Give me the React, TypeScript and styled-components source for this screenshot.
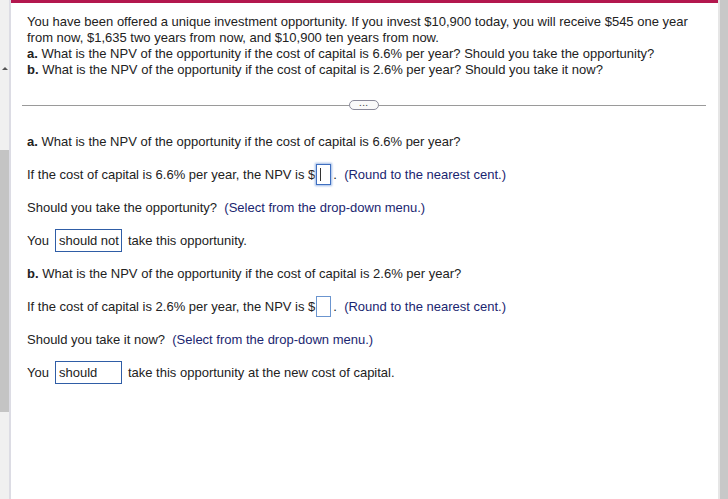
import React from "react";
import styled, { createGlobalStyle } from "styled-components";

const Global = createGlobalStyle`
  html, body { margin: 0; padding: 0; background: #fff; }
  body { font-family: "Liberation Sans", Arial, sans-serif; color: #222; }
`;

const Page = styled.div`
  display: flex;
  width: 728px;
  height: 499px;
  overflow: hidden;
`;

const LeftRail = styled.div`
  width: 9px;
  background: #f0f0f0;
  border-right: 2px solid #dcdce4;
  display: flex;
  flex-direction: column;
  align-items: center;
`;

const Arrow = styled.div`
  margin-top: 67px;
  width: 0;
  height: 0;
  border-left: 3px solid transparent;
  border-right: 3px solid transparent;
  border-bottom: 3px solid #555;
`;

const Thumb = styled.div`
  margin-top: 80px;
  width: 9px;
  height: 262px;
  background: #c4c4c4;
`;

const RightRail = styled.div`
  width: 10px;
  display: flex;
`;

const RailEdge = styled.div`
  width: 2px;
  background: #e6e6e6;
`;

const RailBody = styled.div`
  flex: 1;
  background: #c8c8c8;
`;

const Main = styled.div`
  flex: 1;
  border-top: 3px solid #b3174e;
  padding: 11px 0 0 16px;
  font-size: 13px;
`;

const Intro = styled.div`
  line-height: 16px;
  padding-right: 20px;
`;

const Divider = styled.div`
  display: flex;
  align-items: center;
  margin: 22px 0 0 -5px;
  width: 684px;
`;

const Line = styled.div`
  flex: 1;
  height: 1px;
  background: #9a9a9a;
`;

const MoreBtn = styled.div`
  width: 28px;
  height: 8px;
  border: 1px solid #8a8a9a;
  border-radius: 6px;
  background: #fafafa;
  font-size: 8px;
  line-height: 5px;
  text-align: center;
  color: #555;
  letter-spacing: 1px;
  font-weight: bold;
`;

const Section = styled.div`
  margin-top: 15px;
  display: flex;
  flex-direction: column;
`;

const Row = styled.div`
  height: 33px;
  display: flex;
  align-items: center;
  white-space: pre;
`;

const Hint = styled.span`
  color: #1a2670;
`;

const AnswerBox = styled.span<{ $focus?: boolean }>`
  display: inline-block;
  width: 13px;
  height: 19px;
  margin: 0 2px 0 1px;
  border: 1px solid ${(p) => (p.$focus ? "#3f6fc0" : "#6b95cf")};
  box-shadow: ${(p) => (p.$focus ? "0 0 2px 1px #9fbbe6" : "none")};
  position: relative;
  &::after {
    content: "";
    display: ${(p) => (p.$focus ? "block" : "none")};
    position: absolute;
    left: 3px;
    top: 3px;
    width: 1px;
    height: 13px;
    background: #333;
  }
`;

const Select = styled.span`
  display: inline-flex;
  align-items: center;
  width: 62px;
  height: 21px;
  padding-left: 3px;
  margin: 0 6px 0 6px;
  border: 1px solid #2f5da6;
`;

export default function App() {
  return (
    <>
      <Global />
      <Page>
        <LeftRail>
          <Arrow />
          <Thumb />
        </LeftRail>
        <Main>
          <Intro>
            You have been offered a unique investment opportunity. If you invest $10,900 today, you will receive $545 one year from now, $1,635 two years from now, and $10,900 ten years from now.
            <br />
            <b>a.</b> What is the NPV of the opportunity if the cost of capital is 6.6% per year? Should you take the opportunity?
            <br />
            <b>b.</b> What is the NPV of the opportunity if the cost of capital is 2.6% per year? Should you take it now?
          </Intro>
          <Divider>
            <Line />
            <MoreBtn>...</MoreBtn>
            <Line />
          </Divider>
          <Section>
            <Row>
              <b>a.</b> What is the NPV of the opportunity if the cost of capital is 6.6% per year?
            </Row>
            <Row>
              If the cost of capital is 6.6% per year, the NPV is $<AnswerBox $focus />.  <Hint>(Round to the nearest cent.)</Hint>
            </Row>
            <Row>
              Should you take the opportunity?  <Hint>(Select from the drop-down menu.)</Hint>
            </Row>
            <Row>
              You<Select>should not</Select>take this opportunity.
            </Row>
            <Row>
              <b>b.</b> What is the NPV of the opportunity if the cost of capital is 2.6% per year?
            </Row>
            <Row>
              If the cost of capital is 2.6% per year, the NPV is $<AnswerBox />.  <Hint>(Round to the nearest cent.)</Hint>
            </Row>
            <Row>
              Should you take it now?  <Hint>(Select from the drop-down menu.)</Hint>
            </Row>
            <Row>
              You<Select>should</Select>take this opportunity at the new cost of capital.
            </Row>
          </Section>
        </Main>
        <RightRail>
          <RailEdge />
          <RailBody />
        </RightRail>
      </Page>
    </>
  );
}
